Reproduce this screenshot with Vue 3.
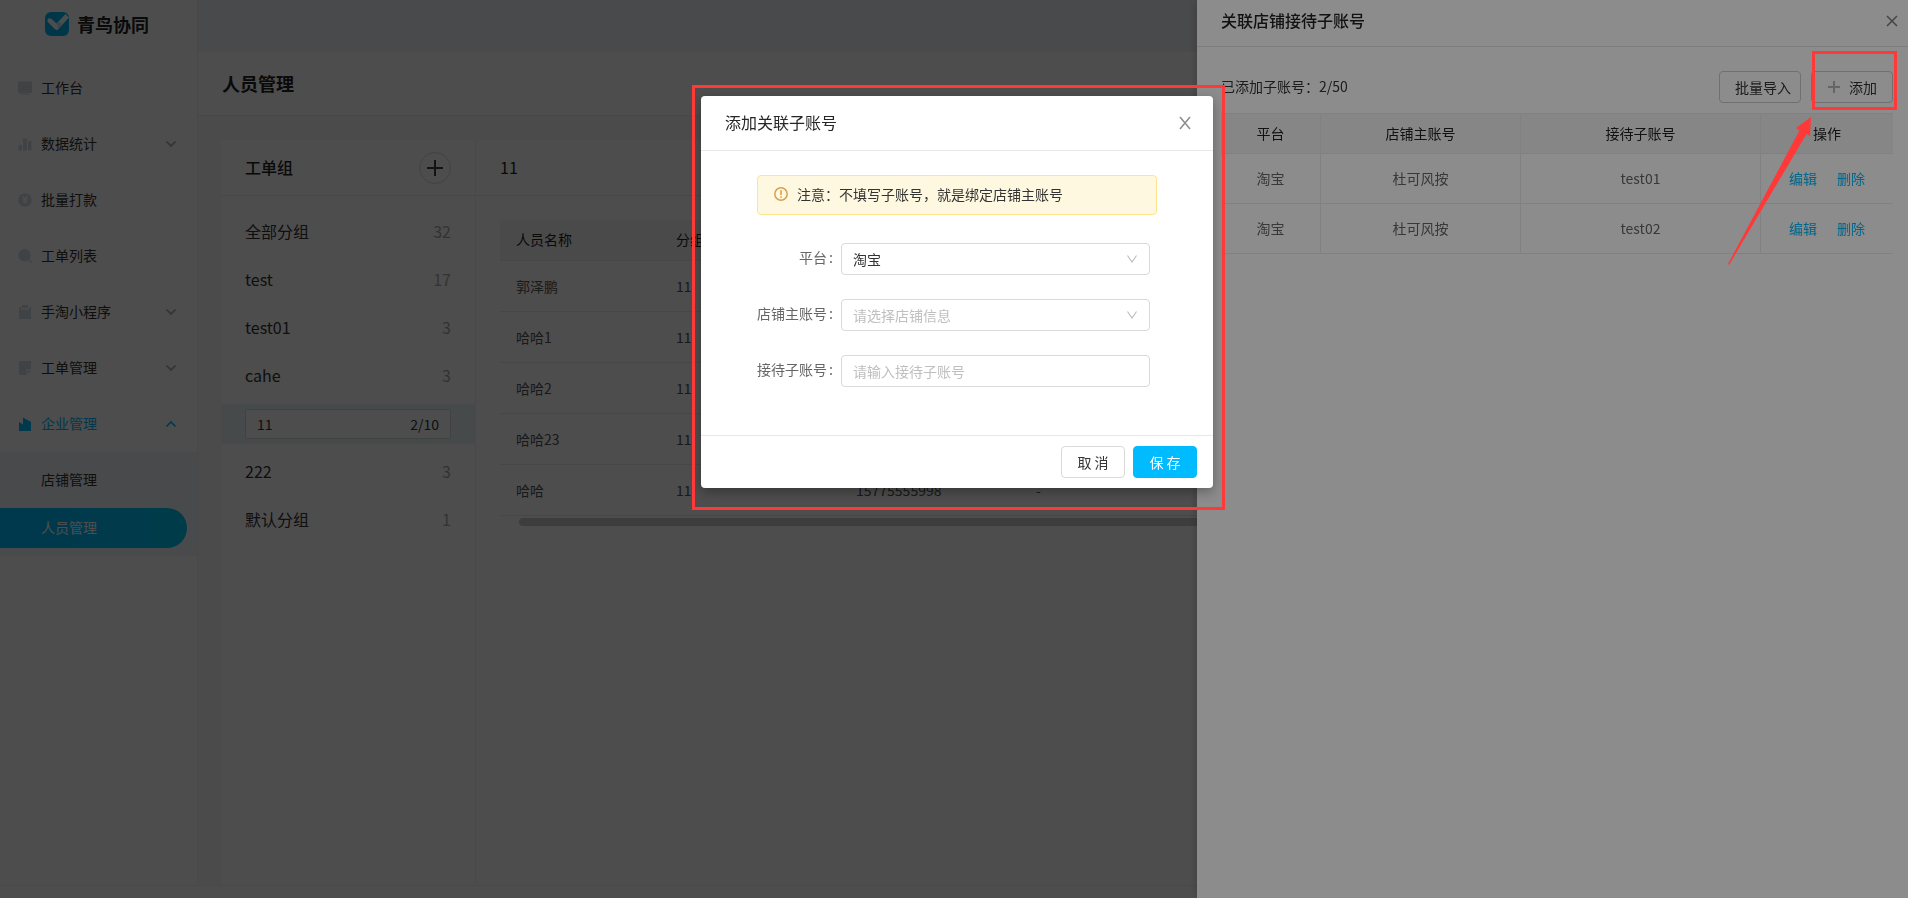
<script setup>
import { ref } from 'vue'

const menu = [
  { label: '工作台', icon: 'desk' },
  { label: '数据统计', icon: 'bars', fold: true },
  { label: '批量打款', icon: 'yen' },
  { label: '工单列表', icon: 'search' },
  { label: '手淘小程序', icon: 'clip', fold: true },
  { label: '工单管理', icon: 'note', fold: true },
  { label: '企业管理', icon: 'factory', fold: true, open: true }
]
const submenu = [
  { label: '店铺管理' },
  { label: '人员管理', active: true }
]
const groups = [
  { name: '全部分组', count: 32 },
  { name: 'test', count: 17 },
  { name: 'test01', count: 3 },
  { name: 'cahe', count: 3 },
  { name: '11', editing: true },
  { name: '222', count: 3 },
  { name: '默认分组', count: 1 }
]
const people = ['郭泽鹏', '哈哈1', '哈哈2', '哈哈23', '哈哈']
const accounts = [
  { platform: '淘宝', main: '杜可风按', sub: 'test01' },
  { platform: '淘宝', main: '杜可风按', sub: 'test02' }
]
const groupName = ref('11')
const platform = ref('淘宝')
const shop = ref('')
const subAccount = ref('')
</script>

<template>
  <div class="page">
    <div class="shell">
      <aside class="sidebar">
        <div class="brand">
          <svg width="24" height="24" viewBox="0 0 24 24" aria-hidden="true">
            <rect width="24" height="24" rx="6" fill="#00b4f0" />
            <path d="M20.500 2 L24 5.600 L13.400 17 Q11.800 18.800 10 17.200 L2.600 9.800 Q1.800 8 3.400 6.600 Q5 5.600 6.600 7 L11.600 11.600 Z" fill="#fff" />
            <path d="M11.600 11.600 L14 9.200 L17 13 L13.400 17 Z" fill="#bfe9fa" />
          </svg>
          <strong>青鸟协同</strong>
        </div>
        <nav>
          <a v-for="m in menu" :key="m.label" href="#" class="nav-item" :class="{ open: m.open }">
            <svg class="nav-icon" width="14" height="14" viewBox="0 0 14 14" fill="currentColor" aria-hidden="true">
              <path v-if="m.icon === 'desk'" d="M1 0.5h12q1 0 1 1v9.500q0 1-1 1H1q-1 0-1-1V1.500q0-1 1-1zM2.500 12.500h9v1.200h-9z" />
              <path v-else-if="m.icon === 'bars'" d="M0.500 8h3.500v5.500H0.500zM5 1.500h4v12H5zM10 4h3.500v9.500H10z" />
              <g v-else-if="m.icon === 'yen'">
                <circle cx="7" cy="7" r="6.800" />
                <path d="M4.800 3.500 7 6.200 9.200 3.500M7 6.200v4.500M4.600 6.700h4.800M4.600 8.700h4.800" stroke="#fff" stroke-width="1.200" fill="none" />
              </g>
              <g v-else-if="m.icon === 'search'">
                <circle cx="6.500" cy="6.300" r="6.200" />
                <path d="m10.500 10.500 3 3" stroke="currentColor" stroke-width="1.400" />
              </g>
              <path v-else-if="m.icon === 'clip'" d="M1 2h2v2.500h8V2h2v12H1zM4 0h6v3.200H4z" />
              <path v-else-if="m.icon === 'note'" d="M2 0h10q1 0 1 1v7.500H8.500V14H2q-1 0-1-1V1q0-1 1-1zM9.500 9.700h3.500L9.500 13.500z" />
              <path v-else d="M1 14V5l4 2.500V0.500L13 5v9z" />
            </svg>
            <span>{{ m.label }}</span>
            <svg v-if="m.fold" class="fold" width="12" height="12" viewBox="0 0 12 12" fill="none" stroke="currentColor" stroke-width="1.600" aria-hidden="true">
              <path :d="m.open ? 'M1.500 8.500 6 4l4.500 4.500' : 'M1.500 3.500 6 8l4.500-4.500'" />
            </svg>
          </a>
          <div class="submenu">
            <a v-for="s in submenu" :key="s.label" href="#" :class="{ active: s.active }">{{ s.label }}</a>
          </div>
        </nav>
      </aside>

      <main class="main">
        <div class="topbar"></div>
        <h1>人员管理</h1>
        <div class="content">
          <section class="groups">
            <header class="panel-head">
              <h2>工单组</h2>
              <button class="round" type="button" aria-label="新增分组">
                <svg width="16" height="16" viewBox="0 0 16 16" stroke="#444" stroke-width="2" aria-hidden="true"><path d="M8 0v16M0 8h16" /></svg>
              </button>
            </header>
            <ul>
              <li v-for="g in groups" :key="g.name" :class="{ editing: g.editing }">
                <label v-if="g.editing" class="edit-box">
                  <input v-model="groupName" aria-label="分组名称" />
                  <span>2/10</span>
                </label>
                <template v-else>
                  <span>{{ g.name }}</span>
                  <span class="count">{{ g.count }}</span>
                </template>
              </li>
            </ul>
          </section>
          <section class="people">
            <header class="panel-head"><h2 class="plain">11</h2></header>
            <div class="people-body">
              <table>
                <colgroup><col class="c160" /><col class="c180" /><col class="c180" /><col /></colgroup>
                <thead>
                  <tr><th>人员名称</th><th>分组</th><th>手机号</th><th>邮箱</th></tr>
                </thead>
                <tbody>
                  <tr v-for="p in people" :key="p">
                    <td>{{ p }}</td><td>11</td><td>15775555998</td><td>-</td>
                  </tr>
                </tbody>
              </table>
              <div class="scroll-thumb"></div>
            </div>
          </section>
        </div>
      </main>
    </div>
    <div class="page-foot"></div>

    <div class="mask"></div>

    <aside class="drawer">
      <header class="drawer-head">
        <h2>关联店铺接待子账号</h2>
        <button class="bare" type="button" aria-label="关闭">
          <svg width="12" height="12" viewBox="0 0 12 12" stroke="#7d7d7d" stroke-width="1.500" aria-hidden="true"><path d="m1 1 10 10M11 1 1 11" /></svg>
        </button>
      </header>
      <div class="drawer-body">
        <div class="tools">
          <span class="total">已添加子账号：2/50</span>
          <button class="btn import" type="button">批量导入</button>
          <button class="btn add" type="button">
            <svg width="12" height="12" viewBox="0 0 12 12" stroke="#b8b8b8" stroke-width="2" aria-hidden="true"><path d="M6 0v12M0 6h12" /></svg>
            添加
          </button>
        </div>
        <table>
          <colgroup><col class="c100" /><col class="c200" /><col class="c240" /><col /></colgroup>
          <thead>
            <tr><th>平台</th><th>店铺主账号</th><th>接待子账号</th><th>操作</th></tr>
          </thead>
          <tbody>
            <tr v-for="a in accounts" :key="a.sub">
              <td>{{ a.platform }}</td>
              <td>{{ a.main }}</td>
              <td>{{ a.sub }}</td>
              <td><div class="ops"><a href="#">编辑</a><a href="#">删除</a></div></td>
            </tr>
          </tbody>
        </table>
      </div>
    </aside>

    <div class="mask"></div>

    <div class="modal-wrap">
      <div class="modal" role="dialog" aria-labelledby="dlg-title">
        <header class="modal-head">
          <h2 id="dlg-title">添加关联子账号</h2>
          <button class="bare" type="button" aria-label="关闭">
            <svg width="12" height="14" viewBox="0 0 12 14" stroke="#8c8c8c" stroke-width="1.500" aria-hidden="true"><path d="m1 1 10 12M11 1 1 13" /></svg>
          </button>
        </header>
        <form class="modal-body" @submit.prevent>
          <div class="alert">
            <svg width="14" height="14" viewBox="0 0 14 14" aria-hidden="true">
              <circle cx="7" cy="7" r="6.200" fill="none" stroke="#d9a04e" stroke-width="1.500" />
              <path d="M7 3.300v4.600M7 9.300v1.500" stroke="#d9a04e" stroke-width="1.600" />
            </svg>
            <span>注意：不填写子账号，就是绑定店铺主账号</span>
          </div>
          <div class="field">
            <label for="platform">平台<i>:</i></label>
            <div class="select">
              <select id="platform" v-model="platform"><option>淘宝</option></select>
              <svg width="10" height="8" viewBox="0 0 10 8" fill="none" stroke="#bfbfbf" stroke-width="1.200" aria-hidden="true"><path d="m0.500 0.500 4.500 6.500 4.500-6.500" /></svg>
            </div>
          </div>
          <div class="field">
            <label for="shop">店铺主账号<i>:</i></label>
            <div class="select">
              <select id="shop" v-model="shop" class="empty"><option value="">请选择店铺信息</option></select>
              <svg width="10" height="8" viewBox="0 0 10 8" fill="none" stroke="#bfbfbf" stroke-width="1.200" aria-hidden="true"><path d="m0.500 0.500 4.500 6.500 4.500-6.500" /></svg>
            </div>
          </div>
          <div class="field">
            <label for="sub">接待子账号<i>:</i></label>
            <input id="sub" v-model="subAccount" type="text" placeholder="请输入接待子账号" />
          </div>
        </form>
        <footer class="modal-foot">
          <button class="btn" type="button">取 消</button>
          <button class="btn primary" type="button">保 存</button>
        </footer>
        <div class="callout"></div>
      </div>
    </div>

    <svg class="marks" width="196" height="272" viewBox="0 0 196 272" aria-hidden="true">
      <rect x="101.500" y="52.500" width="82" height="56" fill="none" stroke="#ff3838" stroke-width="3" />
      <path d="M99 117 98 136 94.500 134 17 265 16 264 87.500 130.500 84 128Z" fill="#ff3838" />
    </svg>
  </div>
</template>

<style>
html,
body {
  margin: 0;
  overflow: hidden;
}
</style>

<style scoped>
.page,
.page * {
  box-sizing: border-box;
}
.page {
  display: flex;
  flex-direction: column;
  height: 100vh;
  background: #fff;
  color: #333;
  font: 14px/22px "Noto Sans CJK SC", "Noto Sans", sans-serif;
}
.page button,
.page input,
.page select {
  font: inherit;
  color: inherit;
}
h1, h2, ul {
  margin: 0;
  padding: 0;
}
a {
  color: inherit;
  text-decoration: none;
}
table {
  width: 100%;
  table-layout: fixed;
  border-collapse: separate;
  border-spacing: 0;
}
.c100 { width: 100px; }
.c160 { width: 160px; }
.c180 { width: 180px; }
.c200 { width: 200px; }
.c240 { width: 240px; }

.shell {
  display: flex;
  flex: 1;
  min-height: 0;
}
.page-foot {
  height: 13px;
  border-top: 1px solid #f0f0f0;
}

.sidebar {
  width: 198px;
  flex: none;
  border-right: 1px solid #f2f2f2;
}
.brand {
  display: flex;
  align-items: center;
  gap: 8px;
  height: 60px;
  padding: 0 0 12px 45px;
  font-size: 18px;
}
.brand strong {
  font-weight: 700;
  color: #222;
}
.nav-item {
  display: flex;
  align-items: center;
  height: 56px;
  padding: 0 20px 0 18px;
}
.nav-item span {
  margin-left: 9px;
  padding-bottom: 2px;
}
.nav-icon {
  color: #d5dde6;
}
.fold {
  margin-left: auto;
  color: #aaa;
}
.open,
.open .nav-icon,
.open .fold {
  color: #00bbff;
}
.submenu {
  display: flex;
  flex-direction: column;
  gap: 8px;
  padding: 8px 10px 8px 0;
  background: #f2f5fa;
}
.submenu a {
  height: 40px;
  padding-left: 41px;
  line-height: 38px;
  border-radius: 0 20px 20px 0;
}
.submenu .active {
  color: #fff;
  background: linear-gradient(90deg, #00bbff, #00c4f5);
}

.main {
  display: flex;
  flex: 1;
  flex-direction: column;
  min-width: 0;
  background: #f8f8f8;
}
.topbar {
  height: 52px;
  background: #f2f5fa;
}
h1 {
  height: 64px;
  padding-left: 24px;
  font-size: 18px;
  line-height: 62px;
  color: #222;
  background: #fff;
  border-bottom: 1px solid #eee;
}
.content {
  display: flex;
  flex: 1;
  margin: 24px 24px 0 23px;
  background: #fff;
}
.groups {
  width: 255px;
  flex: none;
  border-right: 1px solid #f0f0f0;
}
.panel-head {
  display: flex;
  align-items: center;
  justify-content: space-between;
  height: 56px;
  padding: 0 24px;
  border-bottom: 1px solid #ececec;
}
.panel-head h2 {
  padding-bottom: 2px;
  font-size: 16px;
  font-weight: 500;
  color: #222;
}
.panel-head .plain {
  font-weight: 400;
}
.round {
  display: flex;
  align-items: center;
  justify-content: center;
  width: 32px;
  height: 32px;
  padding: 0;
  background: none;
  border: 1px solid #d9d9d9;
  border-radius: 50%;
}
.groups ul {
  display: flex;
  flex-direction: column;
  gap: 8px;
  padding: 16px 0;
  list-style: none;
}
.groups li {
  display: flex;
  align-items: center;
  justify-content: space-between;
  height: 40px;
  padding: 0 24px 2px;
  font-size: 16px;
}
.groups .editing {
  padding-bottom: 0;
  background: #e6f4f9;
}
.count {
  color: #aaa;
}
.edit-box {
  display: flex;
  align-items: center;
  width: 100%;
  height: 30px;
  padding: 0 11px;
  font-size: 14px;
  background: #fff;
  border: 1px solid #d9d9d9;
  border-radius: 2px;
}
.edit-box input {
  flex: 1;
  min-width: 0;
  padding: 0;
  background: none;
  border: 0;
}

.people {
  flex: 1;
  min-width: 0;
}
.people-body {
  padding: 24px;
}
.people th,
.people td {
  padding: 0 16px;
  text-align: left;
  border-bottom: 1px solid #ececec;
}
.people th {
  height: 41px;
  padding-bottom: 2px;
  font-weight: 400;
  color: #222;
  background: #f5f5f5;
}
.people td {
  height: 51px;
  color: #555;
}
.scroll-thumb {
  height: 8px;
  margin: 2px 0 0 19px;
  background: #cacaca;
  border-radius: 4px;
}

.mask {
  position: fixed;
  inset: 0;
  background: rgba(0, 0, 0, 0.45);
}

.drawer {
  position: fixed;
  top: 0;
  right: 0;
  bottom: 0;
  width: 711px;
  background: #fff;
  box-shadow: -2px 0 8px rgba(0, 0, 0, 0.15);
}
.drawer-head {
  display: flex;
  align-items: center;
  justify-content: space-between;
  height: 47px;
  padding: 0 10px 4px 24px;
  border-bottom: 1px solid #e4e4e4;
}
.drawer-head h2 {
  padding-bottom: 2px;
  font-size: 16px;
  font-weight: 500;
  color: #222;
}
.bare {
  display: flex;
  padding: 0;
  background: none;
  border: 0;
}
.drawer-body {
  padding: 24px 15px 0 24px;
}
.tools {
  display: flex;
  align-items: center;
  margin-bottom: 10px;
}
.total {
  margin-right: auto;
  padding-bottom: 2px;
}
.btn {
  display: flex;
  align-items: center;
  justify-content: center;
  height: 32px;
  padding: 0 15px;
  background: #fff;
  border: 1px solid #d9d9d9;
  border-radius: 4px;
}
.btn.import {
  padding: 0 9px 0 15px;
  margin-right: 10px;
  border-color: #ccc;
}
.btn.add {
  gap: 9px;
  padding: 0 15px 0 16px;
  border-color: #ccc;
}
.drawer th,
.drawer td {
  padding: 0 0 2px;
  text-align: center;
  border-right: 1px solid #ececec;
  border-bottom: 1px solid #ececec;
}
.drawer th:last-child,
.drawer td:last-child {
  border-right: 0;
}
.drawer th {
  height: 41px;
  font-weight: 400;
  color: #222;
  background: #f5f5f5;
  border-top: 1px solid #ececec;
}
.drawer td {
  height: 50px;
  color: #666;
}
.ops {
  display: flex;
  justify-content: center;
  gap: 20px;
  color: #00bbff;
}

.modal-wrap {
  position: fixed;
  inset: 0;
  display: flex;
  align-items: flex-start;
  justify-content: center;
  padding: 96px 0 0 6px;
}
.modal {
  position: relative;
  width: 512px;
  background: #fff;
  border-radius: 4px;
  box-shadow: 0 4px 12px rgba(0, 0, 0, 0.3);
}
.callout {
  position: absolute;
  inset: -11px -12px -22px -9px;
  border: 3px solid #ff3838;
  pointer-events: none;
}
.modal-head {
  display: flex;
  align-items: center;
  justify-content: space-between;
  height: 55px;
  padding: 0 22px 0 24px;
  border-bottom: 1px solid #e8e8e8;
}
.modal-head h2 {
  padding-bottom: 2px;
  font-size: 16px;
  font-weight: 400;
  color: #262626;
}
.modal-body {
  display: flex;
  flex-direction: column;
  gap: 24px;
  padding: 24px 56px 48px;
}
.alert {
  display: flex;
  align-items: center;
  gap: 9px;
  height: 40px;
  margin-bottom: 4px;
  padding: 0 16px 2px;
  background: #fff8e1;
  border: 1px solid #ffe58f;
  border-radius: 4px;
}
.field {
  display: flex;
  align-items: center;
  padding-right: 7px;
}
.field label {
  width: 84px;
  flex: none;
  padding-bottom: 4px;
  text-align: right;
  color: #666;
}
.field i {
  margin: 0 8px 0 2px;
  font-style: normal;
}
.select {
  position: relative;
  flex: 1;
}
.select svg {
  position: absolute;
  top: 12px;
  right: 13px;
  pointer-events: none;
}
.field select,
.field input {
  display: block;
  width: 100%;
  height: 32px;
  padding: 0 11px;
  background: #fff;
  border: 1px solid #d9d9d9;
  border-radius: 4px;
  appearance: none;
}
.field input {
  flex: 1;
  min-width: 0;
}
.field select.empty,
.field input::placeholder {
  color: #bfbfbf;
}
.modal-foot {
  display: flex;
  justify-content: flex-end;
  gap: 8px;
  padding: 10px 16px;
  border-top: 1px solid #e8e8e8;
}
.modal-foot .btn {
  width: 64px;
}
.modal-foot .primary {
  color: #fff;
  background: #00bbff;
  border-color: #00bbff;
}

.marks {
  position: fixed;
  top: 0;
  right: 0;
  pointer-events: none;
}
</style>
